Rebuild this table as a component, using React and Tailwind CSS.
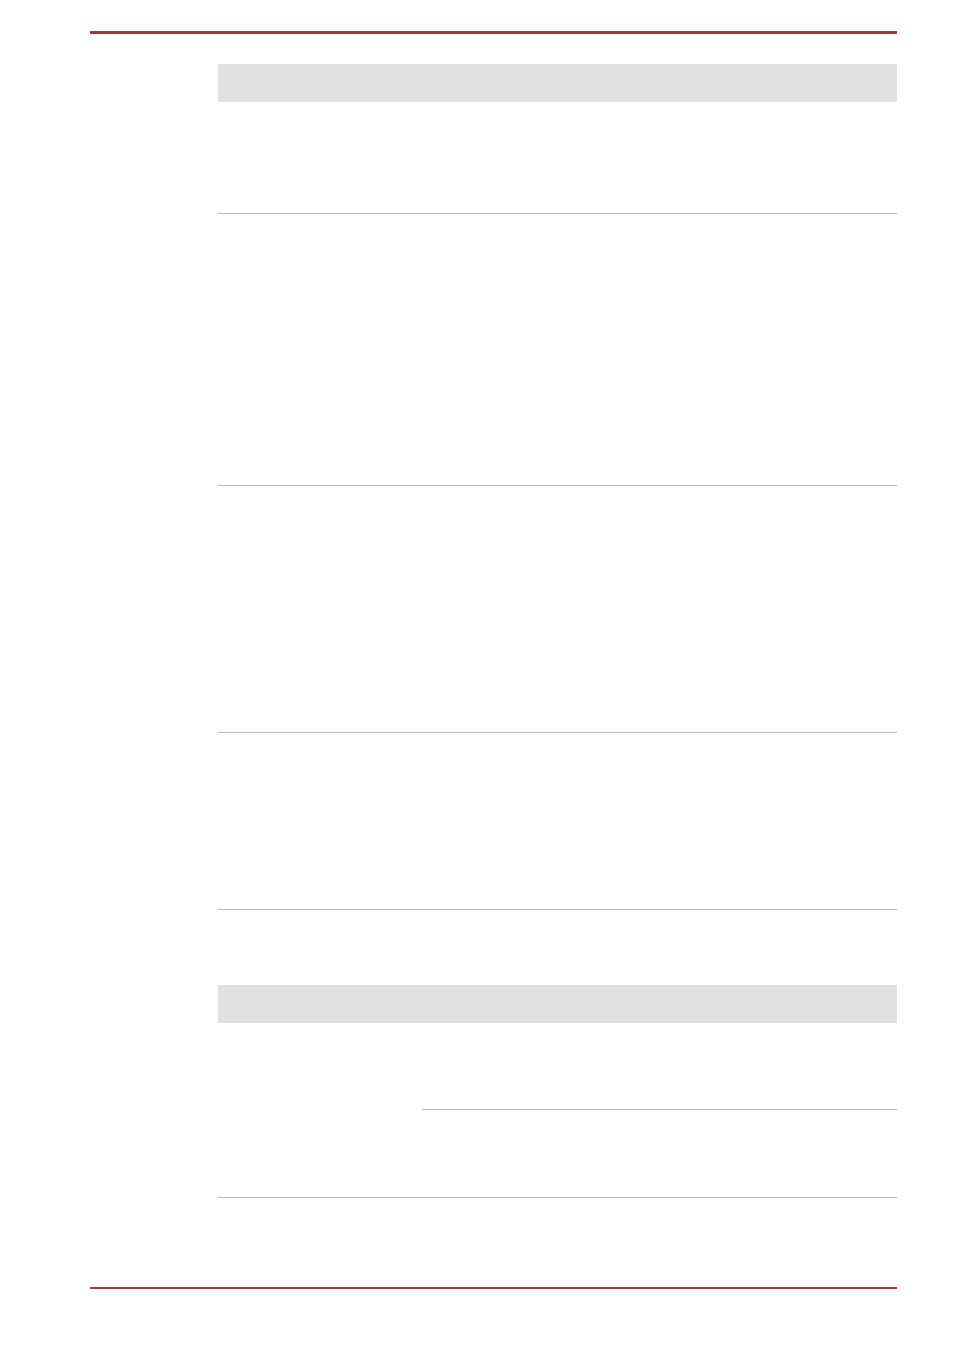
import React from 'react';

const Row = ({ h }) => (
  <div className={`border-b border-[#bdbdbd] ${h}`} />
);

const App = () => {
  return (
    <div className="min-h-screen bg-white pt-[31px]" style={{ fontFamily: '"Liberation Sans", Arial, sans-serif' }}>
      <div className="ml-[90px] w-[807px]">
        {/* header rule */}
        <div className="h-[3px] bg-[#a33636]" />

        <div className="ml-[128px] mt-[30px]">
          {/* first table */}
          <div className="h-[38px] bg-[#e0e0e0]" />
          <Row h="h-[112px]" />
          <Row h="h-[272px]" />
          <Row h="h-[247px]" />
          <Row h="h-[177px]" />

          {/* second table */}
          <div className="mt-[75px] h-[38px] bg-[#e0e0e0]" />
          <div className="flex border-b border-[#bdbdbd]">
            <div className="w-[204px]" />
            <div className="flex-1">
              <div className="h-[87px] border-b border-[#bdbdbd]" />
              <div className="h-[87px]" />
            </div>
          </div>
        </div>

        {/* footer rule */}
        <div className="mt-[89px] h-[2px] bg-[#a33636]" />
      </div>
    </div>
  );
};

export default App;
